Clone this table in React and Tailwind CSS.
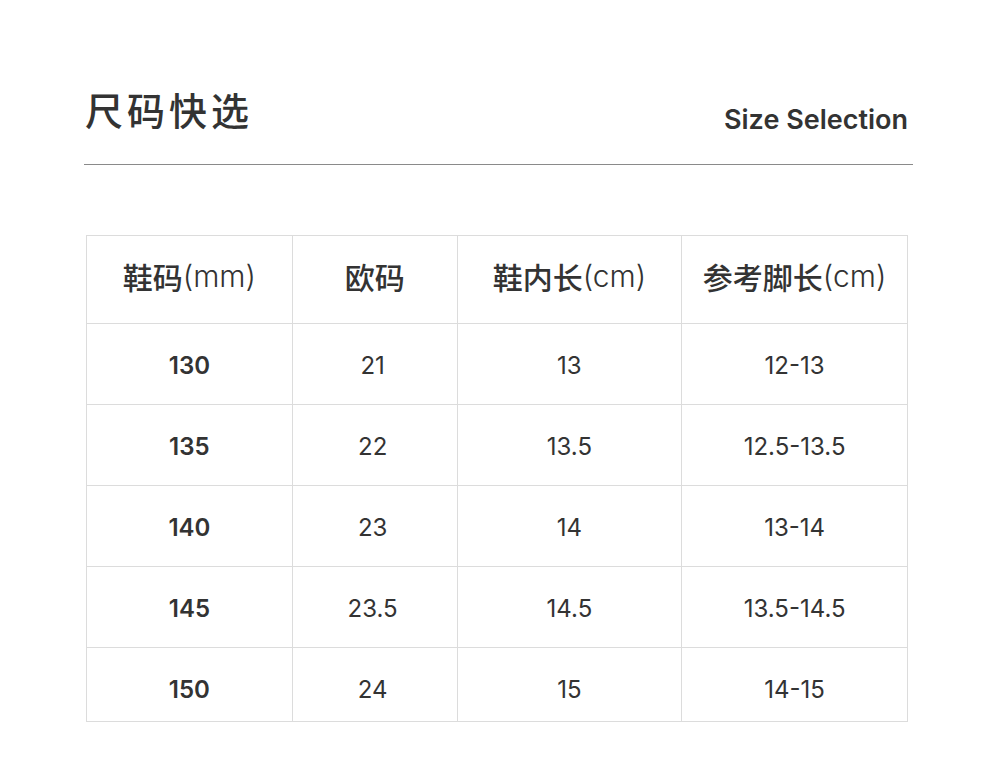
import React from "react";

const rows = [
  ["130", "21", "13", "12-13"],
  ["135", "22", "13.5", "12.5-13.5"],
  ["140", "23", "14", "13-14"],
  ["145", "23.5", "14.5", "13.5-14.5"],
  ["150", "24", "15", "14-15"],
];

const widths = ["w-[206px]", "w-[165px] pr-[4px]", "w-[225px]", "w-[225px]"];

export default function App() {
  const font = { fontFamily: 'Inter, "Noto Sans CJK SC", sans-serif' };
  const cjk = { fontFamily: '"Noto Sans CJK SC", sans-serif' };
  return (
    <div className="w-[1000px] h-[776px] bg-white text-[#333]" style={font}>
      <div className="pt-[84px] ml-[84px] w-[829px]">
        <div className="flex items-end justify-between h-[50px]">
          <div className="text-[38px] leading-[50px] tracking-[4px] font-medium text-[#333] ml-[1px] mt-[-1px]" style={cjk}>
            尺码快选
          </div>
          <div className="text-[27px] leading-[30px] font-semibold text-[#333] mr-[5px] mb-[-1px]">
            Size Selection
          </div>
        </div>
        <div className="mt-[30px] h-[1px] bg-[#8a8a8a] w-[829px]" />
      </div>
      <div className="ml-[86px] mt-[70px] w-[822px] border border-[#dcdcdc]">
        <div className="flex h-[88px] border-b border-[#dcdcdc]">
          {["鞋码", "欧码", "鞋内长", "参考脚长"].map((h, i) => (
            <div
              key={i}
              className={`${i === 1 ? "w-[165px]" : widths[i]} flex items-center justify-center pb-[6px] text-[30px] font-medium ${i < 3 ? "border-r border-[#dcdcdc]" : ""}`}
            >
              <span style={cjk}>{h}</span>
              {i === 0 && <span className="font-light">(mm)</span>}
              {i >= 2 && <span className="font-light">(cm)</span>}
            </div>
          ))}
        </div>
        {rows.map((r, ri) => (
          <div
            key={ri}
            className={`flex ${ri === 4 ? "h-[73px]" : "h-[81px] border-b border-[#dcdcdc]"}`}
          >
            {r.map((c, ci) => (
              <div
                key={ci}
                className={`${widths[ci]} flex items-center justify-center text-[24px] ${ri === 4 ? "pt-[10px]" : "pt-[4px]"} ${ci === 0 ? "font-semibold" : "font-normal"} ${ci < 3 ? "border-r border-[#dcdcdc]" : ""}`}
              >
                {c}
              </div>
            ))}
          </div>
        ))}
      </div>
    </div>
  );
}
